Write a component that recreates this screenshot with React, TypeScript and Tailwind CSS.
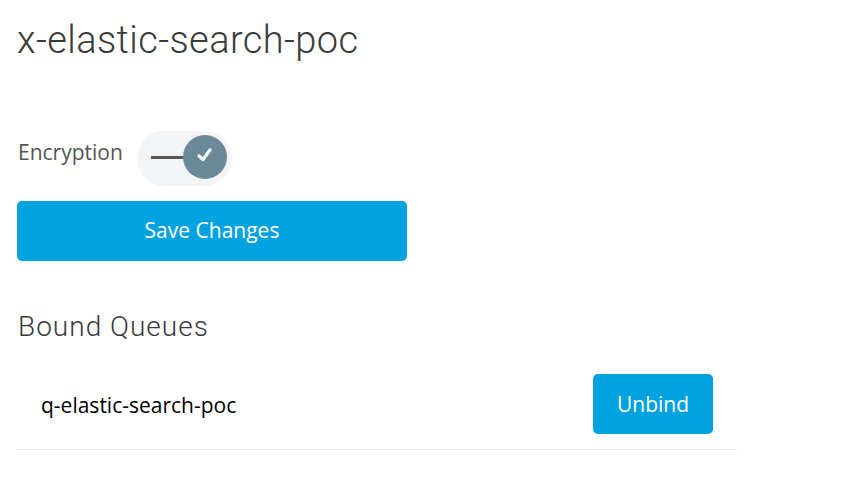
import React from "react";

export default function App() {
  return (
    <div className="w-[842px] h-[484px] bg-white pl-[17px] pt-[17px] font-['Open_Sans',sans-serif]">
      <h1 className="text-[38px] leading-[46px] font-light text-[#3a3a3a] tracking-[0.4px] font-['Roboto',sans-serif]">
        x-elastic-search-poc
      </h1>
      <div className="mt-[68px] flex items-center h-[55px]">
        <span className="text-[21px] text-[#555] pl-[1px] -mt-[12px]">Encryption</span>
        <div className="ml-[14px] w-[95px] h-[55px] rounded-full bg-[#f3f4f6] relative flex items-center">
          <div className="absolute left-[14px] top-[25px] w-[36px] h-[3px] bg-[#555]" />
          <div className="absolute left-[46px] top-[4px] w-[44px] h-[44px] rounded-full bg-[#6b8a99] flex items-center justify-center">
            <svg width="20" height="20" viewBox="0 0 20 20" fill="none" className="-mt-[4px]">
              <path d="M4 11 L8 14.5 L15 5" stroke="white" strokeWidth="3.2" strokeLinecap="round" strokeLinejoin="round" />
            </svg>
          </div>
        </div>
      </div>
      <button className="mt-[15px] w-[390px] h-[60px] rounded-[5px] bg-[#00a3e0] text-white text-[21px] flex items-center justify-center">
        Save Changes
      </button>
      <h2 className="mt-[48px] text-[28px] leading-[36px] font-light tracking-[1px] text-[#3a3a3a] pl-[1px] font-['Roboto',sans-serif]">
        Bound Queues
      </h2>
      <div className="mt-[29px] w-[720px] h-[76px] border-b border-[#e8e8e8] flex items-start justify-between">
        <span className="ml-[24px] mt-[16px] text-[21px] text-black">q-elastic-search-poc</span>
        <button className="mr-[24px] w-[120px] h-[60px] rounded-[5px] bg-[#00a3e0] text-white text-[21px] flex items-center justify-center">
          <span className="mt-[2px]">Unbind</span>
        </button>
      </div>
    </div>
  );
}
